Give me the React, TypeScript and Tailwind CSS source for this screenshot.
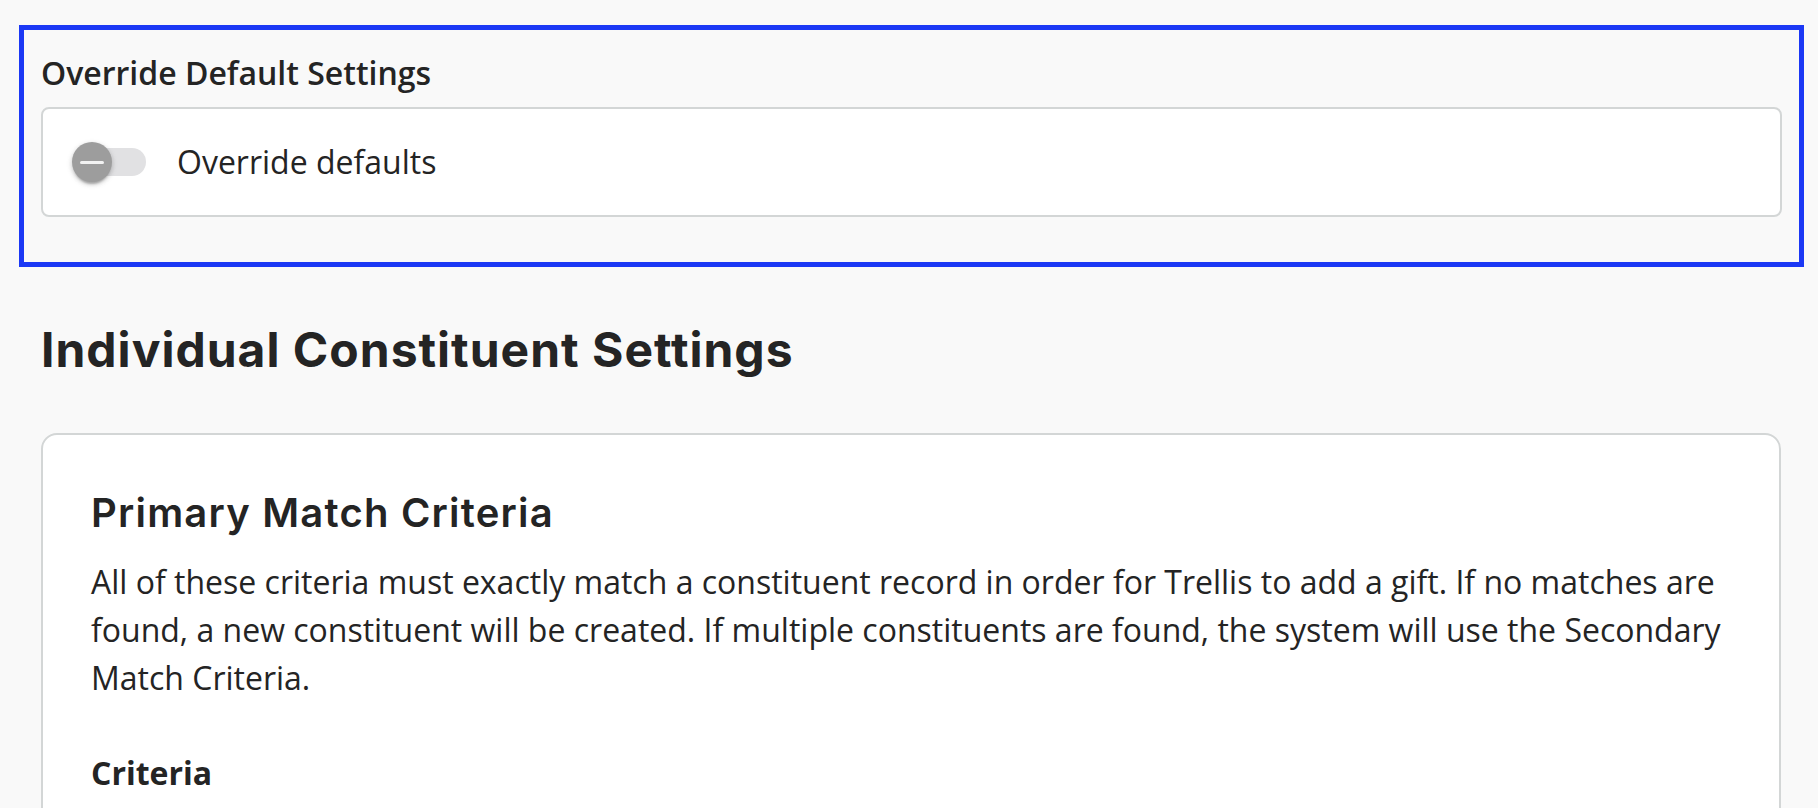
import React, { useState } from 'react';

// Override toggle styled after the disabled-looking material switch in the screenshot
const OverrideSwitch: React.FC<{ checked: boolean; onChange: (v: boolean) => void }> = ({ checked, onChange }) => {
  return (
    <button
      type="button"
      role="switch"
      aria-checked={checked}
      onClick={() => onChange(!checked)}
      className="relative ml-[35px] h-[28px] w-[68px] shrink-0 rounded-full bg-[#e1e1e3]"
    >
      <span className="absolute left-[-6px] top-[-6px] flex h-[40px] w-[40px] items-center justify-center rounded-full bg-[#9d9d9d] shadow-[0_4px_2px_-2px_rgba(0,0,0,0.2),0_2px_4px_rgba(0,0,0,0.14),0_2px_6px_rgba(0,0,0,0.12)]">
        <span className="block h-[3px] w-[24px] rounded-sm bg-[#f2f2f2]" />
      </span>
    </button>
  );
};

export default function App() {
  const [override, setOverride] = useState(false);

  return (
    <div
      className="min-h-screen bg-[#f9f9f9] pb-10 pt-[25px] text-[#242424]"
      style={{ fontFamily: '"Open Sans", "Noto Sans", sans-serif' }}
    >
      {/* Override default settings (highlighted section) */}
      <div className="ml-[19px] w-[1785px] border-[5px] border-[#1b38f5] px-[17px] pb-[45px] pt-[19px]">
        <h3 className="text-[32px] font-semibold leading-[48px]">Override Default Settings</h3>
        <div className="mt-[10px] flex h-[110px] items-center rounded-lg border-2 border-[#d3d6d6] bg-white">
          <OverrideSwitch checked={override} onChange={setOverride} />
          <span className="ml-[31px] text-[32px] leading-[48px]">Override defaults</span>
        </div>
      </div>

      <div className="ml-[41px] w-[1740px]">
        <h2
          className="mt-[54px] text-[48px] font-bold leading-[58px] tracking-[1px]"
          style={{ fontFamily: 'Inter, "Noto Sans", sans-serif' }}
        >
          Individual Constituent Settings
        </h2>

        <div className="mt-[54px] rounded-2xl border-2 border-[#d3d6d6] bg-white px-[48px] pb-12 pt-[54px]">
          <h3
            className="text-[40px] font-semibold leading-[48px] tracking-[1.2px]"
            style={{ fontFamily: 'Inter, "Noto Sans", sans-serif' }}
          >
            Primary Match Criteria
          </h3>
          <p className="mt-[21px] text-[32px] leading-[48px]">
            All of these criteria must exactly match a constituent record in order for Trellis to add a gift. If no
            matches are found, a new constituent will be created. If multiple constituents are found, the system will
            use the Secondary Match Criteria.
          </p>
          <h4 className="mt-[47px] text-[32px] font-bold leading-[48px]">Criteria</h4>
        </div>
      </div>
    </div>
  );
}
